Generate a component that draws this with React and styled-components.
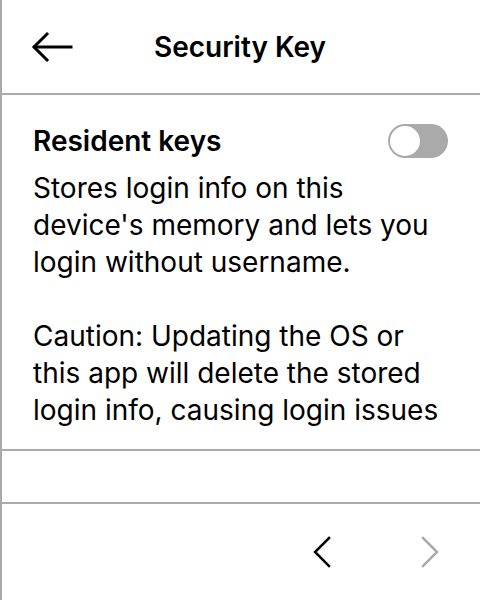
import React from 'react';
import styled, { createGlobalStyle } from 'styled-components';

const GlobalStyles = createGlobalStyle`
    html, body {
        margin: 0;
        padding: 0;
        background: #ffffff;
    }
    body {
        font-family: Inter, "Noto Sans", "Liberation Sans", sans-serif;
        color: #000000;
    }
`;

const Screen = styled.div`
    width: 480px;
    height: 600px;
    box-sizing: border-box;
    border-left: 2px solid #aaaaaa;
    display: flex;
    flex-direction: column;
    overflow: hidden;
`;

const Header = styled.header`
    height: 95px;
    flex-shrink: 0;
    border-bottom: 2px solid #aaaaaa;
    box-sizing: border-box;
    display: grid;
    grid-template-columns: 80px 1fr 80px;
    align-items: center;
`;

const IconButton = styled.button`
    border: none;
    background: none;
    padding: 0;
    display: flex;
    align-items: center;
    justify-content: center;
    color: ${(p) => (p.$disabled ? '#aaaaaa' : '#000000')};
    cursor: pointer;
`;

const BackButton = styled(IconButton)`
    justify-self: start;
    margin-left: 29px;
`;

const Title = styled.h1`
    margin: 0 0 0 -2px;
    text-align: center;
    font-size: 28px;
    font-weight: 600;
`;

const Section = styled.section`
    height: 356px;
    flex-shrink: 0;
    box-sizing: border-box;
    border-bottom: 2px solid #aaaaaa;
    padding: 25px 34px 0 31px;
`;

const SettingRow = styled.div`
    display: flex;
    align-items: center;
    justify-content: space-between;
    height: 42px;
`;

const SettingLabel = styled.div`
    font-size: 28px;
    font-weight: 600;
`;

const Toggle = styled.div`
    width: 60px;
    height: 34px;
    margin-right: -2px;
    border-radius: 17px;
    background: ${(p) => (p.$on ? '#000000' : '#aaaaaa')};
    box-sizing: border-box;
    padding: 2px;
    display: flex;
    justify-content: ${(p) => (p.$on ? 'flex-end' : 'flex-start')};
`;

const Knob = styled.div`
    width: 30px;
    height: 30px;
    border-radius: 50%;
    background: #ffffff;
`;

const Description = styled.p`
    margin: 8px 0 0;
    font-size: 28px;
    line-height: 37px;
    font-weight: 400;
`;

const Spacer = styled.div`
    height: 53px;
    flex-shrink: 0;
    box-sizing: border-box;
    border-bottom: 2px solid #aaaaaa;
`;

const Footer = styled.footer`
    flex: 1;
    display: flex;
    justify-content: flex-end;
    align-items: center;
    gap: 88px;
    padding-right: 40px;
`;

const ArrowLeft = () => (
    <svg width="42" height="32" viewBox="0 0 42 32" fill="none" stroke="currentColor" strokeWidth="3" strokeLinecap="square">
        <path d="M40 16H4" />
        <path d="M16 3L3 16l13 13" />
    </svg>
);

const Chevron = ({ dir }) => (
    <svg width="20" height="34" viewBox="0 0 20 34" fill="none" stroke="currentColor" strokeWidth="2.5" strokeLinecap="square">
        {dir === 'left' ? <path d="M17 3L3 17l14 14" /> : <path d="M3 3l14 14L3 31" />}
    </svg>
);

export default function App() {
    return (
        <>
            <GlobalStyles />
            <Screen>
                <Header>
                    <BackButton aria-label="Back">
                        <ArrowLeft />
                    </BackButton>
                    <Title>Security Key</Title>
                    <div />
                </Header>
                <Section>
                    <SettingRow>
                        <SettingLabel>Resident keys</SettingLabel>
                        <Toggle $on={false}>
                            <Knob />
                        </Toggle>
                    </SettingRow>
                    <Description>
                        Stores login info on this device's memory and lets you login without username.
                        <br />
                        <br />
                        Caution: Updating the OS or this app will delete the stored login info, causing login issues
                    </Description>
                </Section>
                <Spacer />
                <Footer>
                    <IconButton aria-label="Previous">
                        <Chevron dir="left" />
                    </IconButton>
                    <IconButton $disabled aria-label="Next">
                        <Chevron dir="right" />
                    </IconButton>
                </Footer>
            </Screen>
        </>
    );
}
